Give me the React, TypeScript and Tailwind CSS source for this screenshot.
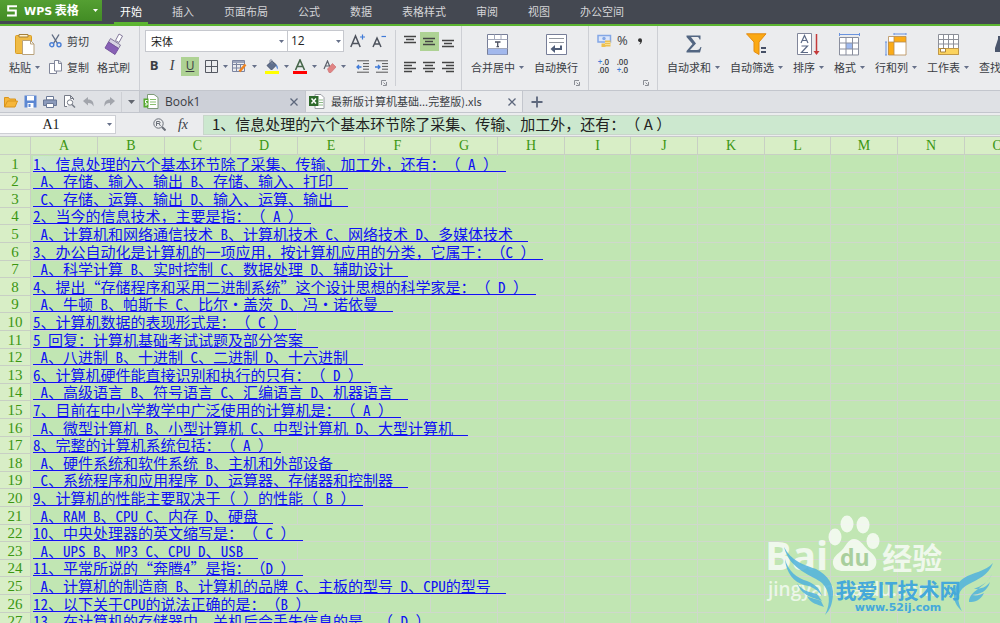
import { useState } from 'react';
import type { ReactNode } from 'react';

const menus = ['开始', '插入', '页面布局', '公式', '数据', '表格样式', '审阅', '视图', '办公空间'];

const columns = ['A', 'B', 'C', 'D', 'E', 'F', 'G', 'H', 'I', 'J', 'K', 'L', 'M', 'N', 'O'];

const rows = [
  '1、信息处理的六个基本环节除了采集、传输、加工外，还有：（ A ） ',
  ' A、存储、输入、输出 B、存储、输入、打印  ',
  ' C、存储、运算、输出 D、输入、运算、输出  ',
  '2、当今的信息技术，主要是指：（ A ） ',
  ' A、计算机和网络通信技术 B、计算机技术 C、网络技术 D、多媒体技术  ',
  '3、办公自动化是计算机的一项应用，按计算机应用的分类，它属于：（C ） ',
  ' A、科学计算 B、实时控制 C、数据处理 D、辅助设计  ',
  '4、提出“存储程序和采用二进制系统”这个设计思想的科学家是：（ D ） ',
  ' A、牛顿 B、帕斯卡 C、比尔·盖茨 D、冯·诺依曼  ',
  '5、计算机数据的表现形式是：（ C ） ',
  '5 回复：计算机基础考试试题及部分答案  ',
  ' A、八进制 B、十进制 C、二进制 D、十六进制  ',
  '6、计算机硬件能直接识别和执行的只有：（ D ） ',
  ' A、高级语言 B、符号语言 C、汇编语言 D、机器语言  ',
  '7、目前在中小学教学中广泛使用的计算机是：（ A ） ',
  ' A、微型计算机 B、小型计算机 C、中型计算机 D、大型计算机  ',
  '8、完整的计算机系统包括：（ A ） ',
  ' A、硬件系统和软件系统 B、主机和外部设备  ',
  ' C、系统程序和应用程序 D、运算器、存储器和控制器  ',
  '9、计算机的性能主要取决于（ ）的性能（ B ） ',
  ' A、RAM B、CPU C、内存 D、硬盘  ',
  '10、中央处理器的英文缩写是：（ C ） ',
  ' A、UPS B、MP3 C、CPU D、USB  ',
  '11、平常所说的“奔腾4”是指：（D ） ',
  ' A、计算机的制造商 B、计算机的品牌 C、主板的型号 D、CPU的型号  ',
  '12、以下关于CPU的说法正确的是：（B ） ',
  '13、在计算机的存储器中，关机后会丢失信息的是。（ D ） ',
];

const Caret = () => (
  <svg width="5" height="3" viewBox="0 0 5 3" className="shrink-0">
    <path d="M0 0h5L2.5 3z" fill="#667089" />
  </svg>
);

const Launcher = () => (
  <button aria-label="更多设置" className="absolute right-2 bottom-1">
    <svg width="6" height="6" viewBox="0 0 6 6" fill="none" stroke="#8b8e95">
      <path d="M.5 5V.5H5M2 5.5h3.5V2M2.5 2.5l2 2" />
    </svg>
  </button>
);

const Divider = () => <span className="h-5 w-px bg-[#cdcfd4]" />;

type BigButtonProps = { label: string; caret?: boolean; children: ReactNode };

const BigButton = ({ label, caret = true, children }: BigButtonProps) => (
  <button className="flex shrink-0 flex-col items-center">
    <span className="flex h-7 items-center">{children}</span>
    <span className="mt-px flex h-4 items-center gap-1 whitespace-nowrap">
      {label}
      {caret && <Caret />}
    </span>
  </button>
);

type ToolProps = { label: string; active?: boolean; children: ReactNode };

const Tool = ({ label, active, children }: ToolProps) => (
  <button
    aria-label={label}
    className={`flex h-[19px] w-[19px] shrink-0 items-center justify-center ${active ? 'bg-[#aed294]' : ''}`}
  >
    {children}
  </button>
);

const Lines = ({ d }: { d: string }) => (
  <svg width="13" height="13" viewBox="0 0 13 13" fill="none" stroke="#444" strokeWidth="1.3">
    <path d={d} />
  </svg>
);

const TitleBar = () => (
  <header className="flex h-[26px] border-b-2 border-[#5cb531] bg-[#444851]">
    <button className="flex h-[21px] w-[102px] items-center bg-linear-to-b from-[#549f32] to-[#428c24] pl-[7px] text-white">
      <svg width="10" height="12" viewBox="0 0 10 12" fill="none" stroke="#fff" strokeWidth="2">
        <path d="M10 1.2H1.2v4.3h7.6v5H0" />
      </svg>
      <span className="ml-[7px] text-xs font-bold whitespace-nowrap">
        <span className="font-['DejaVu_Sans',sans-serif] text-[11px]">WPS</span> 表格
      </span>
      <svg width="5" height="3" viewBox="0 0 5 3" className="ml-auto mr-1">
        <path d="M0 0h5L2.5 3z" fill="#fff" />
      </svg>
    </button>
    <nav className="ml-3 flex gap-[18px]">
      {menus.map((name, i) => (
        <button
          key={name}
          className={`border-b-2 px-[6px] whitespace-nowrap ${i === 0 ? 'border-[#5cb531] text-white' : 'border-transparent text-[#d4d5d8]'}`}
        >
          {name}
        </button>
      ))}
    </nav>
  </header>
);

const ClipboardGroup = () => (
  <div className="flex w-[139px] shrink-0 pt-1 pl-[9px]">
    <BigButton label="粘贴">
      <svg width="22" height="23" viewBox="0 0 22 23">
        <rect x="1.5" y="2.5" width="16" height="18" rx="1" fill="#efbb45" stroke="#d99d22" />
        <path d="M5 4V1.5h9V4z" fill="#fff3d0" stroke="#a5803a" />
        <path d="M8.500 7.500h8l3.500 3.500v10.500H8.500z" fill="#fff" stroke="#b9a27c" />
        <path d="M16.500 7.500V11H20" fill="none" stroke="#b9a27c" />
      </svg>
    </BigButton>
    <div className="ml-[9px] flex flex-col">
      <button className="flex h-[22px] items-center gap-[5px] whitespace-nowrap">
        <svg width="13" height="14" viewBox="0 0 13 14" fill="none" strokeWidth="1.4">
          <path d="M3 0.500 8.500 9.500M10 .5 4.500 9.500" stroke="#5f6c83" />
          <circle cx="2.800" cy="10.700" r="2" stroke="#4a7fd6" />
          <circle cx="10" cy="10.700" r="2" stroke="#4a7fd6" />
        </svg>
        剪切
      </button>
      <button className="mt-[7px] flex h-4 items-center gap-[5px] whitespace-nowrap">
        <svg width="13" height="14" viewBox="0 0 13 14" fill="#fff" stroke="#81869a">
          <path d="M.5 3.500h7v10h-7z" />
          <path d="M5.500.5h4.500l2.500 2.500v8h-7zM9.500.5V3.500h3" />
        </svg>
        复制
      </button>
    </div>
    <div className="ml-2">
      <BigButton label="格式刷" caret={false}>
        <svg width="20" height="22" viewBox="0 0 20 22">
          <path d="m11.500 7.500 3.500-6.500 3.500 2-3.500 6.500z" fill="#fff" stroke="#857a9c" />
          <path d="m6.500 5.500 10 6.500-2 3.500-10-6.500z" fill="#d8d3e4" stroke="#857a9c" />
          <path d="m4.500 9 10 6.500-3.500 6-10-6.500z" fill="#8760b5" stroke="#76549e" />
        </svg>
      </BigButton>
    </div>
  </div>
);

const FontGroup = () => (
  <div className="relative flex w-[256px] shrink-0 flex-col border-l border-[#cdcfd4] pt-1 pl-[5px]">
    <div className="flex h-[22px] items-center">
      <label className="relative flex h-[22px] w-[143px] items-center border border-[#c6c8ce] bg-white">
        <select aria-label="字体" className="w-full appearance-none pl-[5px] text-[11px] text-[#222] outline-none">
          <option>宋体</option>
        </select>
        <span className="pointer-events-none absolute right-[3px]"><Caret /></span>
      </label>
      <label className="relative flex h-[22px] w-[56px] items-center border border-l-0 border-[#c6c8ce] bg-white">
        <select aria-label="字号" className="w-full appearance-none pl-[3px] font-['Open_Sans',sans-serif] text-xs text-[#222] outline-none">
          <option>12</option>
        </select>
        <span className="pointer-events-none absolute right-[2px]"><Caret /></span>
      </label>
      <button aria-label="增大字号" className="ml-[6px]">
        <svg width="15" height="14" viewBox="0 0 15 14" fill="none" strokeWidth="1.5">
          <path d="M.8 13 5.500 2l4.700 11M2.300 9.500h6.400" stroke="#4d525c" />
          <path d="M12.500.5v5M10 3h5" stroke="#3f7ad8" strokeWidth="1.200" />
        </svg>
      </button>
      <button aria-label="减小字号" className="ml-[7px]">
        <svg width="15" height="14" viewBox="0 0 15 14" fill="none" strokeWidth="1.500">
          <path d="M1 13 5 4l4 9M2.400 10h5.200" stroke="#4d525c" />
          <path d="M9.500 2.500H14" stroke="#3f7ad8" strokeWidth="1.200" />
        </svg>
      </button>
    </div>
    <div className="mt-1 flex h-5 items-center">
      <button className="w-[18px] font-['Open_Sans',sans-serif] text-[13px] font-bold">B</button>
      <button className="w-[18px] font-['Liberation_Serif',serif] text-sm italic">I</button>
      <button className="h-[19px] w-[18px] bg-[#aed294] font-['Open_Sans',sans-serif] text-xs underline">U</button>
      <span className="ml-[2px]"><Divider /></span>
      <button aria-label="边框" className="ml-1 flex items-center gap-[5px]">
        <svg width="13" height="13" viewBox="0 0 13 13" fill="none" stroke="#555962">
          <path d="M.5.5h12v12H.5zM6.500.5v12M.5 6.500h12" />
        </svg>
        <Caret />
      </button>
      <button aria-label="绘制边框" className="ml-1 flex items-center gap-[5px]">
        <svg width="15" height="13" viewBox="0 0 15 13" fill="none">
          <path d="M.5.5h12v11H.5zM.5 4.500h12M.5 8h9M4.500 1v10.500M8.500 4v5" stroke="#7b84a0" />
          <path d="M1 1h11v2H1z" fill="#9aa3ba" />
          <path d="m7.500 11.500 6-7" stroke="#ee8422" strokeWidth="2.500" />
        </svg>
        <Caret />
      </button>
      <span className="ml-[5px]"><Divider /></span>
      <button aria-label="填充颜色" className="ml-[3px] flex items-center gap-[5px]">
        <svg width="14" height="15" viewBox="0 0 14 15">
          <path d="m2 6.500 5-4.500 4.500 4-5 5z" fill="#5f6f8d" stroke="#4a566f" />
          <path d="M5 4V1.500c0-1 2-1 2 0V5" fill="none" stroke="#7d879c" />
          <path d="M10.500 5.500c3 1 2.500 4 2 5-1-1-1-3-2-5z" fill="#4d7fd1" />
          <path d="M0 12h14v3H0z" fill="#ff0" />
        </svg>
        <Caret />
      </button>
      <button aria-label="字体颜色" className="ml-1 flex items-center gap-[5px]">
        <svg width="14" height="15" viewBox="0 0 14 15">
          <path d="m2.500 11 4.500-10 4.500 10M4 7.500h6" fill="none" stroke="#46664a" strokeWidth="1.600" />
          <path d="M0 12h14v3H0z" fill="#f00" />
        </svg>
        <Caret />
      </button>
      <button aria-label="清除格式" className="ml-[6px] flex items-center gap-[5px]">
        <svg width="13" height="13" viewBox="0 0 13 13">
          <path d="m1 9 3.500-8L7 7M2 6h4" fill="none" stroke="#5b606b" strokeWidth="1.200" />
          <path d="m4.500 9 5-5.500 3.500 3.500-5 5.500H6z" fill="#e08484" stroke="#c96a6a" strokeWidth=".6" />
        </svg>
        <Caret />
      </button>
      <span className="ml-[4px]"><Divider /></span>
      <button aria-label="减少缩进" className="ml-[6px]">
        <svg width="13" height="13" viewBox="0 0 13 13" fill="none">
          <path d="M1 .8h12M7 3.600h6M7 6.400h6M7 9.200h6M1 12.200h12" stroke="#555" />
          <path d="M5.500 7H1M3 5 1 7l2 2" stroke="#3f7ad8" strokeWidth="1.300" />
        </svg>
      </button>
      <button aria-label="增加缩进" className="ml-[6px]">
        <svg width="13" height="13" viewBox="0 0 13 13" fill="none">
          <path d="M1 .8h12M7 3.600h6M7 6.400h6M7 9.200h6M1 12.200h12" stroke="#555" />
          <path d="M0 7h5M3 5l2 2-2 2" stroke="#3f7ad8" strokeWidth="1.300" />
        </svg>
      </button>
    </div>
    <Launcher />
  </div>
);

const AlignGroup = () => (
  <div className="my-1 flex w-[66px] shrink-0 flex-col border-l border-[#cdcfd4] pl-[5px]">
    <div className="flex h-[22px] items-center">
      <Tool label="顶端对齐"><Lines d="M0 1.500h12M2 4.500h8M0 7.500h12" /></Tool>
      <Tool label="垂直居中" active><Lines d="M0 3.500h12M2 6.500h8M0 9.500h12" /></Tool>
      <Tool label="底端对齐"><Lines d="M0 5.500h12M2 8.500h8M0 11.500h12" /></Tool>
    </div>
    <div className="mt-1 flex h-5 items-center">
      <Tool label="左对齐"><Lines d="M0 2.500h12M0 5.500h8M0 8.500h12M0 11.500h8" /></Tool>
      <Tool label="水平居中"><Lines d="M0 2.500h12M2 5.500h8M0 8.500h12M2 11.500h8" /></Tool>
      <Tool label="右对齐"><Lines d="M0 2.500h12M4 5.500h8M0 8.500h12M4 11.500h8" /></Tool>
    </div>
  </div>
);

const MergeGroup = () => (
  <div className="relative flex w-[127px] shrink-0 gap-[10px] border-l border-[#cdcfd4] pt-1 pl-[9px]">
    <BigButton label="合并居中">
      <svg width="21" height="21" viewBox="0 0 21 21" fill="none" stroke="#777e98">
        <path d="M.5.5h20v20H.5z" fill="#fff" />
        <path d="M1 14h19v6.500H1z" fill="#a2b8ec" stroke="none" />
        <path d="M.5 5.500h20M7.500.5v5M14 .5v5M.5 14.500h20" stroke="#a4a9bb" />
        <path d="M8 8h5.500M10.700 8v5M9.500 12.700h2.500" stroke="#4d5262" strokeWidth="1.300" />
      </svg>
    </BigButton>
    <BigButton label="自动换行" caret={false}>
      <svg width="21" height="21" viewBox="0 0 21 21" fill="none" stroke="#777e98">
        <path d="M.5.5h20v20H.5z" fill="#fff" />
        <path d="M3 4.500h15M3 8.500h15" stroke="#92979f" />
        <path d="M15 11.500v3.500H7" stroke="#4f5d78" strokeWidth="2" />
        <path d="m9 11-4.500 4L9 19z" fill="#4f5d78" stroke="none" />
      </svg>
    </BigButton>
    <Launcher />
  </div>
);

const NumberGroup = () => (
  <div className="relative flex w-[70px] shrink-0 flex-col border-x border-[#cdcfd4] pt-1 pl-2">
    <div className="flex h-[22px] items-center">
      <button aria-label="货币样式">
        <svg width="15" height="14" viewBox="0 0 15 14">
          <path d="M1 1.500h12.500V8H1z" fill="#dbe6fa" stroke="#84a7e6" strokeWidth="1.500" />
          <circle cx="7" cy="4.500" r="1.700" fill="#84a7e6" />
          <path d="M8 6.500h5.500v6H8zM4.500 9.500h4v3.500h-4z" fill="#edc04d" />
          <path d="M8 8.500h5.500M8 10.500h5.500" stroke="#fff2c3" strokeWidth=".6" />
        </svg>
      </button>
      <button className="ml-[5px] font-['Open_Sans',sans-serif] text-[13px]">%</button>
      <button aria-label="千位分隔" className="ml-[9px]">
        <svg width="6" height="7" viewBox="0 0 6 7">
          <path d="M1 2.200a2 2 0 1 1 4 0C5 4.500 4 6 2 6.500 3 5.500 3.300 5 3.300 4 2 4 1 3.300 1 2.200z" fill="#333" />
        </svg>
      </button>
    </div>
    <div className="mt-1 flex h-5 items-center gap-[7px] font-['Open_Sans',sans-serif] text-[8px] leading-[8px] font-semibold">
      <button className="flex w-[12px] flex-col items-end">
        <span><span className="text-[#3f7ad8]">+</span>.0</span>
        <span>.00</span>
      </button>
      <button className="flex w-[12px] flex-col items-end">
        <span>.00</span>
        <span><span className="text-[#3f7ad8]">+</span>.0</span>
      </button>
    </div>
    <Launcher />
  </div>
);

const EditGroup = () => (
  <div className="flex min-w-0 flex-1 gap-[10px] overflow-hidden pt-1 pl-[9px]">
    <BigButton label="自动求和">
      <svg width="16" height="18" viewBox="0 0 16 18">
        <path d="M.5.5h14v4h-1c-.5-2-1-2.500-3-2.500H5l5 6.500-6 6.500h7c2 0 2.700-1 3.500-3h1L14 17.500H.5V16l6-7-6-7z" fill="#536682" />
      </svg>
    </BigButton>
    <BigButton label="自动筛选">
      <svg width="21" height="23" viewBox="0 0 21 23">
        <path d="M.5.8h19.500L13 9v12.500l-5-3V9z" fill="#fba913" stroke="#e38b10" />
        <path d="M15 15h5M15 19h5" stroke="#465066" strokeWidth="1.800" />
      </svg>
    </BigButton>
    <BigButton label="排序">
      <svg width="23" height="23" viewBox="0 0 23 23" fill="none">
        <path d="M.5.5h14v21H.500z" fill="#fff" stroke="#81869a" />
        <path d="m4 10 3.500-7.500L11 10M5 7.500h5M4.500 13h6l-6 6.500h6.500" stroke="#5c6a86" strokeWidth="1.200" />
        <path d="M19.500 1v19" stroke="#c43a3a" strokeWidth="1.500" />
        <path d="m16.500 18 3 4 3-4z" fill="#c43a3a" />
      </svg>
    </BigButton>
    <BigButton label="格式">
      <svg width="21" height="23" viewBox="0 0 21 23" fill="none">
        <path d="M.5 4.500h19v17H.5z" fill="#fff" />
        <path d="M7 10h6v6H7z" fill="#9fbaf0" />
        <path d="M.5 4.500h19v17.500H.5zM7 4.500v17.500M13.500 4.500v17.500M.5 10h19M.5 16h19" stroke="#8a8f9e" />
        <path d="M.5 1.500h20M.5 0v3M20.500 0v3" stroke="#6a93df" />
      </svg>
    </BigButton>
    <BigButton label="行和列">
      <svg width="22" height="23" viewBox="0 0 22 23" fill="none">
        <path d="M3 3.500h18v18.500H3z" fill="#fff" />
        <path d="M9 3.500h12V9H9zM3 9h6v13H3z" fill="#fbab17" />
        <path d="M3.500 3.500h17.500v18.500H3.500zM9 3.500v18.500M3.500 9H21" stroke="#b58a50" strokeWidth=".8" />
        <path d="M9 1h12M9 0v2M21 0v2M1 9v13M0 9h2M0 22h2" stroke="#6a93df" />
      </svg>
    </BigButton>
    <BigButton label="工作表">
      <svg width="21" height="21" viewBox="0 0 21 21" fill="none">
        <path d="M.5.5h20v20H.5z" fill="#fff" />
        <path d="M.5.5h20v20H.5zM.5 5.500h20M.5 10h20M5.500.5v14M10.500.5v14M15.500.5v14" stroke="#8c8f98" />
        <path d="M.5 14.500h20v6H.5z" fill="#fbd35f" stroke="#c29846" />
        <path d="M2.500 14.500h5v3.500h-5z" fill="#fff" stroke="#a8833f" />
      </svg>
    </BigButton>
    <BigButton label="查找替换">
      <svg width="22" height="18" viewBox="0 0 22 18" fill="#4b566c">
        <path d="M3 4V1h5v3l2 2h2l2-2V1h5v3l3 9v4h-8v-6h-6v6H0v-4z" />
      </svg>
    </BigButton>
  </div>
);

const QuickBar = () => (
  <div className="flex h-[23px] border-y border-[#c3c6cd] bg-[#dfe1e5]">
    <div className="flex w-[139px] shrink-0 items-center gap-[6px] pl-1">
      <button aria-label="打开">
        <svg width="14" height="12" viewBox="0 0 14 12" fill="#f6b63b" stroke="#d9941c">
          <path d="M.5 11V1.500h4l1 1.500h6v2M.5 11 3.500 5h10L11 11z" />
        </svg>
      </button>
      <button aria-label="保存">
        <svg width="13" height="13" viewBox="0 0 13 13">
          <path d="M.5.5h12v12H.500z" fill="#5c87d2" />
          <path d="M3 1h7v4.500H3zM3.500 8h6v5h-6z" fill="#fff" />
          <path d="M4.500 9h2v3h-2z" fill="#5c87d2" />
        </svg>
      </button>
      <button aria-label="打印">
        <svg width="14" height="12" viewBox="0 0 14 12" stroke="#6a7896">
          <path d="M3.500.5h7V4h-7z" fill="#fff" />
          <path d="M.5 4h13v5.500H.5z" fill="#8b9abb" />
          <path d="M3.500 7.500h7v4h-7z" fill="#fff" />
        </svg>
      </button>
      <button aria-label="打印预览">
        <svg width="13" height="13" viewBox="0 0 13 13" fill="none" stroke="#767b87">
          <path d="M4 11.500H1.500V.5h6l3 3V5M7.500.5V3.500h3" fill="#fff" />
          <circle cx="7" cy="7.500" r="2.700" fill="#fff" />
          <path d="m9 9.500 3 3" strokeWidth="1.500" />
        </svg>
      </button>
      <button aria-label="撤销" className="ml-px">
        <svg width="12" height="10" viewBox="0 0 12 10" fill="#a2a5ac">
          <path d="M5 0v2.500c4 0 6 2.500 5.500 7C9.500 7 8 6 5 6v2.500L0 4z" />
        </svg>
      </button>
      <button aria-label="恢复" className="ml-[2px]">
        <svg width="12" height="10" viewBox="0 0 12 10" fill="#a2a5ac">
          <path d="M7 0v2.500c-4 0-6 2.500-5.500 7C2.500 7 4 6 7 6v2.500L12 4z" />
        </svg>
      </button>
      <Divider />
      <button aria-label="自定义"><svg width="7" height="4" viewBox="0 0 7 4"><path d="M0 0h7L3.500 4z" fill="#62666f" /></svg></button>
    </div>
    <div className="flex w-[167px] shrink-0 items-center border-x border-[#c3c6cd] bg-[#cdd0d8] pr-[7px] pl-[3px]">
      <svg width="16" height="15" viewBox="0 0 16 15">
        <path d="M4.500.5h6.500l4 3v11H4.500z" fill="#fff" stroke="#7e9a78" />
        <path d="M7 5.500h6M7 8h6M7 10.500h6" stroke="#89c06e" />
        <path d="M.5 4.500h5v9h-5z" fill="#56a92f" />
        <path d="M4.500 6.500h-2V9H4v2H2" fill="none" stroke="#fff" />
      </svg>
      <button className="ml-[6px] font-['Open_Sans',sans-serif] text-xs">Book1</button>
      <button aria-label="关闭 Book1" className="ml-auto"><CloseIcon /></button>
    </div>
    <div className="flex w-[217px] shrink-0 items-center border-r border-[#c3c6cd] bg-[#ebecee] pr-[6px] pl-[3px]">
      <svg width="16" height="15" viewBox="0 0 16 15">
        <path d="M6 .5h6l3 3v11H6z" fill="#fff" stroke="#9a9da3" />
        <path d="M10 6h4M10 8.500h4M10 11h4" stroke="#8cb786" />
        <path d="M0 2h9.500v10H0z" fill="#2e6a2c" />
        <path d="m2.500 4.500 4.500 5M7 4.500l-4.500 5" stroke="#fff" strokeWidth="1.500" />
      </svg>
      <button className="ml-[6px] whitespace-nowrap">最新版计算机基础...完整版).xls</button>
      <button aria-label="关闭工作簿" className="ml-auto"><CloseIcon /></button>
    </div>
    <button aria-label="新建" className="px-2">
      <svg width="12" height="12" viewBox="0 0 12 12" stroke="#5d677c" strokeWidth="1.800">
        <path d="M6 .5v11M.5 6h11" />
      </svg>
    </button>
  </div>
);

const CloseIcon = () => (
  <svg width="8" height="8" viewBox="0 0 8 8" stroke="#5d677c" strokeWidth="1.300">
    <path d="m.5.5 7 7M7.500.5l-7 7" />
  </svg>
);

const FormulaBar = () => {
  const [formula, setFormula] = useState(rows[0].trim());
  return (
    <div className="flex h-6 items-center border-b border-[#c6c9ca] bg-[#ebecee]">
      <label className="relative flex h-[19px] w-[116px] shrink-0 items-center border border-l-0 border-[#cdcfd4] bg-white">
        <input
          aria-label="名称框"
          defaultValue="A1"
          className="w-full pr-[14px] pl-px text-center font-['Liberation_Serif',serif] text-sm text-[#222] outline-none"
        />
        <span className="pointer-events-none absolute right-[3px]"><Caret /></span>
      </label>
      <button aria-label="查找" className="ml-[37px]">
        <svg width="13" height="13" viewBox="0 0 13 13" fill="none" stroke="#6b7079">
          <circle cx="5.500" cy="5.500" r="4.700" />
          <path d="M3.500 8V3.500H6c1.500 0 1.500 2 0 2H4M6 5.500 7.500 8" />
          <path d="m9 9 3.500 3.500" strokeWidth="2" />
        </svg>
      </button>
      <button className="ml-[10px] w-[14px] font-['Liberation_Serif',serif] text-sm italic">fx</button>
      <input
        aria-label="编辑栏"
        value={formula}
        onChange={(e) => setFormula(e.target.value)}
        className="ml-[13px] h-5 min-w-0 flex-1 border border-r-0 border-[#c8d6ca] bg-[#cce8cf] pl-2 text-[15px] text-[#222] outline-none [text-spacing-trim:space-all]"
      />
    </div>
  );
};

// latin runs take half the width of a chinese character
const CellText = ({ text }: { text: string }) => (
  <>
    {text.split(/([\x20-\x7e]+)/).map((run, i) =>
      i % 2 ? (
        <span key={i} className="[font-feature-settings:'hwid']">{run}</span>
      ) : (
        run
      ),
    )}
  </>
);

const Sheet = () => (
  <div className="min-h-0 flex-1 overflow-hidden bg-[#c1e6b3]">
    <table className="w-[1031px] table-fixed border-separate border-spacing-0">
      <colgroup>
        <col className="w-[31px]" />
        {columns.map((c, i) => (
          <col key={c} className={i % 3 === 2 ? 'w-[66px]' : 'w-[67px]'} />
        ))}
      </colgroup>
      <thead className="bg-[#d8eec6] font-['Liberation_Serif',serif] text-sm leading-[16px] text-[#3b9612]">
        <tr>
          <th className="h-[18px] border-r border-b border-[#c8cfc4] p-0" aria-label="全选" />
          {columns.map((c) => (
            <th key={c} scope="col" className="border-r border-b border-[#c8cfc4] p-0 font-normal">
              {c}
            </th>
          ))}
        </tr>
      </thead>
      <tbody>
        {rows.map((text, i) => (
          <tr key={text} className="h-[18px] [&:nth-child(5n+2)]:h-[17px] [&:nth-child(5n+4)]:h-[17px]">
            <th
              scope="row"
              className="border-r border-b border-[#c8cfc4] bg-[#d8eec6] p-0 font-['Liberation_Serif',serif] text-[15px] leading-[16px] font-normal text-[#3b9612]"
            >
              {i + 1}
            </th>
            <td className="border-r border-b border-[#cfd8cc] p-0 align-bottom">
              <a
                href="#"
                className={`relative ml-[2px] block h-4 w-max border-b border-[#1010f4] text-[15px] leading-[15px] whitespace-pre text-[#1010f4] [text-spacing-trim:space-all] ${
                  i === 0 ? 'bg-linear-to-r from-[#cce8cf] to-[#c1e6b3] to-20%' : 'bg-[#c1e6b3]'
                }`}
              >
                <CellText text={text} />
              </a>
            </td>
            {columns.slice(1).map((c) => (
              <td key={c} className="border-r border-b border-[#cfd8cc] p-0" />
            ))}
          </tr>
        ))}
      </tbody>
    </table>
  </div>
);

const Watermark = () => (
  <div className="pointer-events-none absolute right-1 bottom-1 h-[104px] w-[236px]">
    <div className="absolute top-0 left-[5px] flex items-end text-white/75">
      <span className="font-['Open_Sans',sans-serif] text-[40px] leading-[48px] font-bold">Bai</span>
      <svg width="54" height="58" viewBox="0 0 54 58" fill="currentColor" className="mb-[6px]">
        <ellipse cx="7" cy="22" rx="6.500" ry="8.500" />
        <ellipse cx="19" cy="9" rx="6.500" ry="8.500" />
        <ellipse cx="35" cy="10" rx="6.500" ry="8.500" />
        <ellipse cx="45" cy="26" rx="6.500" ry="8" />
        <path d="M26 24c6 0 9 6 14 11 5 4 10 8 8 15-2 6-7 6-11 6H15c-5 0-9-2-10-7-1-7 5-10 9-14s6-11 12-11z" />
        <text x="12" y="51" fontSize="23" fontWeight="700" fontFamily="Open Sans, sans-serif" fill="#a9cf9d">du</text>
      </svg>
      <span className="mb-[7px] text-[30px] leading-[32px] font-bold">经验</span>
    </div>
    <p className="absolute top-[62px] left-[8px] font-['Open_Sans',sans-serif] text-[19px] leading-[24px] font-semibold text-white/70">
      jingyan.baidu.com
    </p>
    <svg width="236" height="80" viewBox="0 0 236 80" fill="#4fb1dc" fillOpacity=".85" className="absolute bottom-0 left-0">
      <path d="M24 8c7 14 20 18 32 22 12 6 18 16 17 26-1 10-3 15-8 20 6-12 5-24-3-32-9-8-32-12-38-36z" />
      <path d="M25 20c3 12 12 19 22 22 8 3 13 8 15 15-6-8-12-10-18-11-10-3-18-12-19-26zM37 44c5 8 12 9 20 11l5 7c-10-4-20-5-25-18zM47 57c5 3 10 3 14 5l3 6c-7-3-13-3-17-11z" />
      <path d="M233 24c-5 13-15 16-24 21-10 5-14 13-7 27-12-10-10-25 2-33 9-6 21-6 29-15z" />
      <path d="M232 35c-4 9-11 12-18 15 8 0 12-2 16-7-3 10-10 12-18 13 5 1 8 0 12-2-4 8-9 9-15 9 0-12 17-14 23-28z" />
    </svg>
    <div className="absolute bottom-[4px] left-[74px] w-[128px] text-center text-[#45a9da]">
      <p className="text-[21px] leading-[24px] font-bold whitespace-nowrap">我爱IT技术网</p>
      <p className="font-['DejaVu_Sans',sans-serif] text-[11px] leading-[14px] font-bold">www.52ij.com</p>
    </div>
  </div>
);

export default function App() {
  return (
    <div className="relative flex h-screen flex-col overflow-hidden bg-[#ebecee] font-['Noto_Sans_CJK_SC',sans-serif] text-[11px] text-[#3a3d44]">
      <TitleBar />
      <div className="flex h-16 items-stretch">
        <ClipboardGroup />
        <FontGroup />
        <AlignGroup />
        <MergeGroup />
        <NumberGroup />
        <EditGroup />
      </div>
      <QuickBar />
      <FormulaBar />
      <Sheet />
      <Watermark />
    </div>
  );
}
